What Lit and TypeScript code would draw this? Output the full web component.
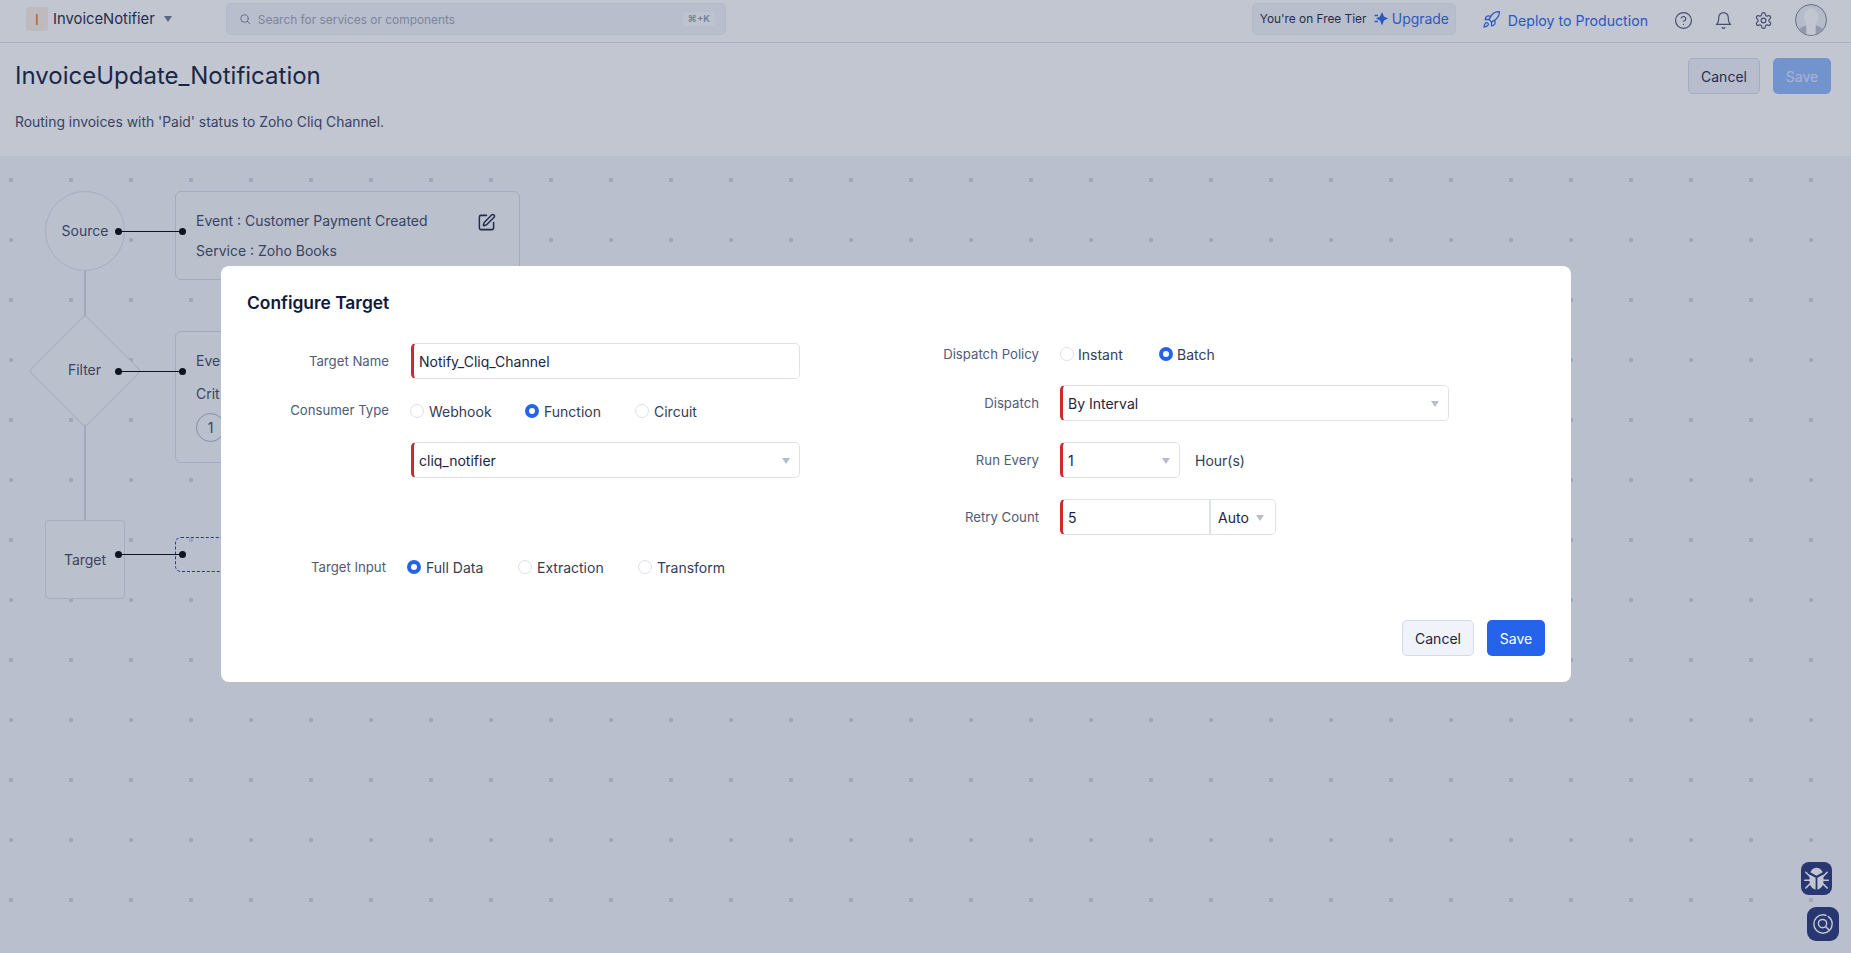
import { LitElement, html, css, svg } from "lit";
import { customElement } from "lit/decorators.js";

const icon = (cls: string, body: unknown) => html`<svg class=${cls} viewBox="0 0 24 24" fill="none" stroke="currentColor" stroke-width="1.8" stroke-linecap="round" stroke-linejoin="round">${body}</svg>`;
const searchIc = svg`<circle cx="11" cy="11" r="7.5"/><line x1="21" y1="21" x2="16.6" y2="16.6"/>`;
const rocket = svg`<path d="M4.5 16.5c-1.5 1.26-2 5-2 5s3.74-.5 5-2c.71-.84.7-2.13-.09-2.91a2.18 2.18 0 0 0-2.91-.09z"/><path d="m12 15-3-3a22 22 0 0 1 2-3.95A12.88 12.88 0 0 1 22 2c0 2.72-.78 7.5-6 11a22.35 22.35 0 0 1-4 2z"/><path d="M9 12H4s.55-3.03 2-4c1.62-1.08 5 0 5 0"/><path d="M12 15v5s3.03-.55 4-2c1.08-1.62 0-5 0-5"/>`;
const help = svg`<circle cx="12" cy="12" r="10"/><path d="M9.09 9a3 3 0 0 1 5.83 1c0 2-3 3-3 3"/><path d="M12 17h.01"/>`;
const bell = svg`<path d="M6 8a6 6 0 0 1 12 0c0 7 3 9 3 9H3s3-2 3-9"/><path d="M10.3 21a1.94 1.94 0 0 0 3.4 0"/>`;
const gear = svg`<path d="M12.22 2h-.44a2 2 0 0 0-2 2v.18a2 2 0 0 1-1 1.73l-.43.25a2 2 0 0 1-2 0l-.15-.08a2 2 0 0 0-2.73.73l-.22.38a2 2 0 0 0 .73 2.73l.15.1a2 2 0 0 1 1 1.72v.51a2 2 0 0 1-1 1.74l-.15.09a2 2 0 0 0-.73 2.73l.22.38a2 2 0 0 0 2.73.73l.15-.08a2 2 0 0 1 2 0l.43.25a2 2 0 0 1 1 1.73V20a2 2 0 0 0 2 2h.44a2 2 0 0 0 2-2v-.18a2 2 0 0 1 1-1.73l.43-.25a2 2 0 0 1 2 0l.15.08a2 2 0 0 0 2.73-.73l.22-.39a2 2 0 0 0-.73-2.73l-.15-.08a2 2 0 0 1-1-1.74v-.5a2 2 0 0 1 1-1.74l.15-.09a2 2 0 0 0 .73-2.73l-.22-.38a2 2 0 0 0-2.73-.73l-.15.08a2 2 0 0 1-2 0l-.43-.25a2 2 0 0 1-1-1.73V4a2 2 0 0 0-2-2z"/><circle cx="12" cy="12" r="3"/>`;
const pen = svg`<path d="M12 3H5a2 2 0 0 0-2 2v14a2 2 0 0 0 2 2h14a2 2 0 0 0 2-2v-7"/><path d="M18.375 2.625a1 1 0 0 1 3 3l-9.013 9.014a2 2 0 0 1-.853.505l-2.873.84a.5.5 0 0 1-.62-.62l.84-2.873a2 2 0 0 1 .506-.852z"/>`;

@customElement("app-root")
export class AppRoot extends LitElement {
  static styles = css`
    :host { display: block; position: relative; width: 100%; height: 953px; overflow: hidden; font-family: Inter, "Liberation Sans", sans-serif; font-size: 14px; color: #1b2540; background: #f2f5f8; }
    * { box-sizing: border-box; }
    .page { display: flex; flex-direction: column; height: 100%; }
    .top { height: 43px; flex: none; display: flex; align-items: center; background: #fff; border-bottom: 1px solid #dfe3ec; }
    .logo { width: 22px; height: 24px; margin-left: 26px; border-radius: 3px; background: #fbeee3; display: flex; align-items: center; justify-content: center; color: #d4702a; font-size: 14px; margin-top: -4px; }
    .app { margin-left: 5px; font-size: 14.8px; color: #1b2540; margin-top: -4px; }
    .caret { width: 0; height: 0; border-left: 4.5px solid transparent; border-right: 4.5px solid transparent; border-top: 6px solid #6d7690; margin-left: 9px; margin-top: -4px; }
    .search { width: 500px; height: 32px; margin-left: 54px; margin-top: -4px; display: flex; align-items: center; padding: 0 10px 0 12px; border: 1px solid #e9edf3; border-radius: 5px; background: #f2f4f9; color: #6e7892; }
    .i-s { width: 12px; height: 12px; margin-right: 7px; flex: none; }
    .ph { font-size: 11.9px; color: #9aa2b6; flex: 1; }
    .kbd { font-size: 9.5px; font-weight: 600; color: #8f98ad; background: #fafbfd; border-radius: 3px; padding: 0 3px; height: 14px; line-height: 14px; width: 32px; text-align: center; }
    .tier { width: 204px; height: 32px; margin-left: auto; margin-top: -4px; display: flex; align-items: center; padding-left: 7px; border: 1px solid #e9edf3; border-radius: 5px; background: #f2f4f9; font-size: 11.85px; white-space: nowrap; flex: none; }
    .spark { width: 14px; height: 14px; margin-left: auto; margin-right: 4px; color: #2563eb; flex: none; }
    .up { font-size: 13.9px; color: #2563eb; margin-right: 6px; }
    .i-r { width: 19px; height: 19px; margin-left: 26.5px; color: #2563eb; margin-top: -3px; stroke-width: 1.6; flex: none; }
    .dep { font-size: 14.15px; color: #2563eb; margin-left: 6.5px; margin-top: -2px; white-space: nowrap; }
    .ic { width: 19px; height: 19px; color: #4c556e; stroke-width: 1.5; flex: none; margin-top: -2px; }
    .i-h { margin-left: 26px; }
    .i-b { margin-left: 21px; }
    .i-g { margin-left: 21px; }
    .ava { width: 32px; height: 32px; margin: -3px 24px 0 22px; border-radius: 50%; border: 1px solid #7d8493; background: #eef0f4; overflow: hidden; flex: none; }
    .ava svg { display: block; width: 100%; height: 100%; }
    .sub { height: 113px; flex: none; background: #fff; display: flex; justify-content: space-between; padding: 15px 20px 0 15px; }
    h1 { margin: 0; font-size: 24px; font-weight: 400; line-height: 36px; color: #0f1a3a; }
    .desc { margin-top: 19px; font-size: 13.9px; line-height: 18px; color: #3a4560; }
    .acts { display: flex; gap: 13px; }
    .btn { height: 36px; border-radius: 5px; display: flex; align-items: center; justify-content: center; font-size: 14px; }
    .ghost { width: 72px; border: 1px solid #d5dae8; background: #f1f3fb; color: #1b2540; }
    .pri { width: 58px; background: #2563eb; color: #fff; }
    .pri.dim { background: #8eb7fd; color: #dbe6fb; }
    .canvas { flex: 1; position: relative; background-color: #f2f5f8; background-image: radial-gradient(circle at center, #cdd2dd 2px, transparent 2.4px); background-size: 60px 60px; background-position: -19px -6px; }
    .n { position: absolute; display: flex; align-items: center; justify-content: center; border: 1px solid #d8dce7; background: #f5f6fa; color: #3a4560; }
    .circle { left: 45px; top: 35px; width: 80px; height: 80px; border-radius: 50%; padding-bottom: 2px; }
    .diamond { left: 45px; top: 175px; width: 80px; height: 80px; transform: rotate(45deg); border-radius: 4px; }
    .dlabel { position: absolute; left: 45px; top: 174px; width: 79px; height: 79px; display: flex; align-items: center; justify-content: center; color: #3a4560; }
    .square { left: 45px; top: 364px; width: 80px; height: 79px; border-radius: 4px; }
    .v { position: absolute; left: 84px; width: 2px; background: #d1d5df; }
    .v1 { top: 115px; height: 46px; }
    .v2 { top: 269px; height: 96px; }
    .c { position: absolute; left: 118px; width: 64px; height: 1.5px; background: #000; }
    .c::before, .c::after { content: ""; position: absolute; top: -2.75px; width: 7px; height: 7px; border-radius: 50%; background: #000; }
    .c::before { left: -3.5px; } .c::after { right: -3.5px; }
    .c1 { top: 74.5px; } .c2 { top: 214.5px; } .c3 { top: 397.5px; }
    .card { position: absolute; left: 175px; width: 345px; border: 1px solid #d1d8e6; border-radius: 6px; background: #f5f6fa; padding: 20px 20px; }
    .card1 { top: 35px; height: 89px; }
    .card2 { top: 175px; height: 132px; }
    .card p { margin: 0 0 12px; line-height: 18px; color: #3a4560; white-space: nowrap; }
    .card2 p { margin-bottom: 15px; }
    .i-p { position: absolute; left: 300.5px; top: 20.5px; width: 19px; height: 19px; color: #1b2540; stroke-width: 1.9; }
    .one { width: 29px; height: 29px; border-radius: 50%; border: 1px solid #a9b0c2; display: flex; align-items: center; justify-content: center; margin-top: -5px; color: #3a4560; }
    .dash { position: absolute; left: 175px; top: 381px; width: 100px; height: 35px; border: 1px dashed #1f3a8a; border-radius: 6px; }
    .fab { position: absolute; display: flex; align-items: center; justify-content: center; background: #233178; color: #fff; border-radius: 8px; }
    .bug { left: 1801px; top: 706px; width: 31px; height: 33px; }
    .at { left: 1807px; top: 751px; width: 32px; height: 34px; border-radius: 9px; }
    .overlay { position: absolute; inset: 0; background: rgba(52, 65, 102, 0.3); }
    .modal { position: absolute; left: 221px; top: 266px; width: 1350px; height: 416px; background: #fff; border-radius: 8px; padding: 26px 26px 26px 26px; display: flex; flex-direction: column; }
    h2 { margin: 0; font-size: 17.4px; font-weight: 600; line-height: 22px; color: #0f1a3a; }
    .form { display: flex; margin-top: 29px; margin-left: -26px; flex: 1; }
    .col { display: flex; flex-direction: column; }
    .left { width: 640px; }
    .row { display: flex; align-items: center; height: 36px; }
    .lab { width: 168px; text-align: right; color: #505b78; flex: none; margin-right: 21px; font-size: 13.2px; white-space: nowrap; }
    .lift { padding-bottom: 2px; }
    .left .lab { margin-right: 22px; }
    .left .radios { margin-left: -1px; }
    .ctl { display: flex; align-items: center; height: 36px; border: 1px solid #dfe2ec; border-left: 3.5px solid #cb2a2f; border-radius: 5px; padding-left: 5px; position: relative; color: #1b2540; background: #fff; }
    .w389 { width: 389px; } .w120 { width: 120px; } .w149 { width: 149px; border-radius: 5px 0 0 5px; border-right: none; }
    .sel::after { content: ""; position: absolute; right: 9px; top: 15px; width: 0; height: 0; border-left: 4px solid transparent; border-right: 4px solid transparent; border-top: 6px solid #b8bdcb; }
    .auto { width: 67px; height: 36px; display: flex; align-items: center; padding-left: 7px; border: 1px solid #dfe2ec; border-left: 2px solid #dfe2ec; border-radius: 0 5px 5px 0; position: relative; }
    .auto.sel::after { right: 11px; }
    .unit { margin-left: 15px; color: #333c57; }
    .radios { display: flex; align-items: center; height: 36px; }
    .r { width: 14px; height: 14px; border-radius: 50%; border: 1px solid #dde1ea; background: #fff; flex: none; margin-right: 5px; }
    .r.on { border: 4px solid #2563eb; }
    .right .r { margin-right: 4px; }
    .opt { display: flex; align-items: center; color: #333c57; white-space: nowrap; }
    .mt14 { margin-top: 14px; } .mt13 { margin-top: 13px; } .mt71 { margin-top: 71px; } .mt21 { margin-top: 21px; }
    .sp { margin-left: -3px; }
    .right { margin-left: 0; width: 660px; margin-top: -7px; }
    .wide { width: 178px !important; }
    .foot { display: flex; justify-content: flex-end; gap: 13px; }
  `;

  private radio(label: string, on: boolean, width: number) {
    return html`<div class="opt" style="width:${width}px"><span class="r ${on ? "on" : ""}"></span>${label}</div>`;
  }

  render() {
    return html`
      <div class="page">
        <div class="top">
          <div class="logo">I</div>
          <div class="app">InvoiceNotifier</div>
          <div class="caret"></div>
          <div class="search">${icon("i-s", searchIc)}<span class="ph">Search for services or components</span><span class="kbd">⌘+K</span></div>
          <div class="tier">You're on Free Tier
            <svg class="spark" viewBox="0 0 14 14" fill="currentColor"><path d="M8 0 10 4.500 14 6.500 10 8.500 8 13.500 6 8.500 2 6.500 6 4.500Z"/><path d="M.5 2.800h3.500v1.500H.5zM.5 8.800h3.500v1.500H.5z"/></svg>
            <span class="up">Upgrade</span></div>
          ${icon("i-r", rocket)}
          <span class="dep">Deploy to Production</span>
          ${icon("ic i-h", help)}${icon("ic i-b", bell)}${icon("ic i-g", gear)}
          <div class="ava"><svg viewBox="0 0 32 32"><path d="M2 32c0-6 3-9 8-10h12c5 1 8 4 8 10z" fill="#b9bec9"/><ellipse cx="16" cy="13" rx="7.500" ry="9.500" fill="#fff"/><path d="M11 18h10v14H11z" fill="#fff"/></svg></div>
        </div>
        <div class="sub">
          <div><h1>InvoiceUpdate_Notification</h1><div class="desc">Routing invoices with 'Paid' status to Zoho Cliq Channel.</div></div>
          <div class="acts"><div class="btn ghost">Cancel</div><div class="btn pri dim">Save</div></div>
        </div>
        <div class="canvas">
          <div class="v v1"></div><div class="v v2"></div>
          <div class="n circle">Source</div>
          <div class="n diamond"></div><div class="dlabel">Filter</div>
          <div class="n square">Target</div>
          <div class="card card1"><p>Event : Customer Payment Created</p><p>Service : Zoho Books</p>${icon("i-p", pen)}</div>
          <div class="card card2"><p>Eve</p><p>Crit</p><div class="one">1</div></div>
          <div class="dash"></div>
          <div class="c c1"></div><div class="c c2"></div><div class="c c3"></div>
          <div class="fab bug"><svg width="27" height="27" viewBox="0 0 24 24" fill="#fff" stroke="#fff" stroke-width="1.4" stroke-linecap="round"><path fill="none" d="M2.500 6.500 6 10M21.500 6.500 18 10M1.500 13.500H6M22.500 13.500H18M2.500 20.500 6 17M21.500 20.500 18 17"/><path stroke="none" d="M6.500 6.500C8 3.500 10 2.500 12 2.500s4 1 5.500 4L12 9.500z"/><path stroke="none" d="M5.800 8.500 11.200 11.300V21.800C8 21.300 5.800 18.500 5.800 14.500zM18.200 8.500 12.800 11.300V21.800C16 21.300 18.200 18.500 18.200 14.500z"/></svg></div>
          <div class="fab at"><svg width="22" height="22" viewBox="0 0 24 24" fill="none" stroke="#fff" stroke-width="1.6" stroke-linecap="round"><circle cx="12" cy="12" r="10" stroke-dasharray="50 3"/><circle cx="11.500" cy="11.500" r="4.500"/><path d="M15 15l3 3"/></svg></div>
        </div>
      </div>
      <div class="overlay"></div>
      <div class="modal">
        <h2>Configure Target</h2>
        <div class="form">
          <div class="col left">
            <div class="row"><div class="lab">Target Name</div><div class="ctl w389">Notify_Cliq_Channel</div></div>
            <div class="row mt14"><div class="lab lift">Consumer Type</div><div class="radios">${this.radio("Webhook", false, 115)}${this.radio("Function", true, 110)}${this.radio("Circuit", false, 70)}</div></div>
            <div class="row mt13"><div class="lab"></div><div class="ctl sel w389">cliq_notifier</div></div>
            <div class="row mt71"><div class="lab sp">Target Input</div><div class="radios">${this.radio("Full Data", true, 111)}${this.radio("Extraction", false, 120)}${this.radio("Transform", false, 90)}</div></div>
          </div>
          <div class="col right">
            <div class="row"><div class="lab wide">Dispatch Policy</div><div class="radios">${this.radio("Instant", false, 99)}${this.radio("Batch", true, 60)}</div></div>
            <div class="row mt13"><div class="lab wide">Dispatch</div><div class="ctl sel w389">By Interval</div></div>
            <div class="row mt21"><div class="lab wide">Run Every</div><div class="ctl sel w120">1</div><div class="unit">Hour(s)</div></div>
            <div class="row mt21"><div class="lab wide">Retry Count</div><div class="ctl w149">5</div><div class="auto sel">Auto</div></div>
          </div>
        </div>
        <div class="foot"><div class="btn ghost">Cancel</div><div class="btn pri">Save</div></div>
      </div>
    `;
  }
}
